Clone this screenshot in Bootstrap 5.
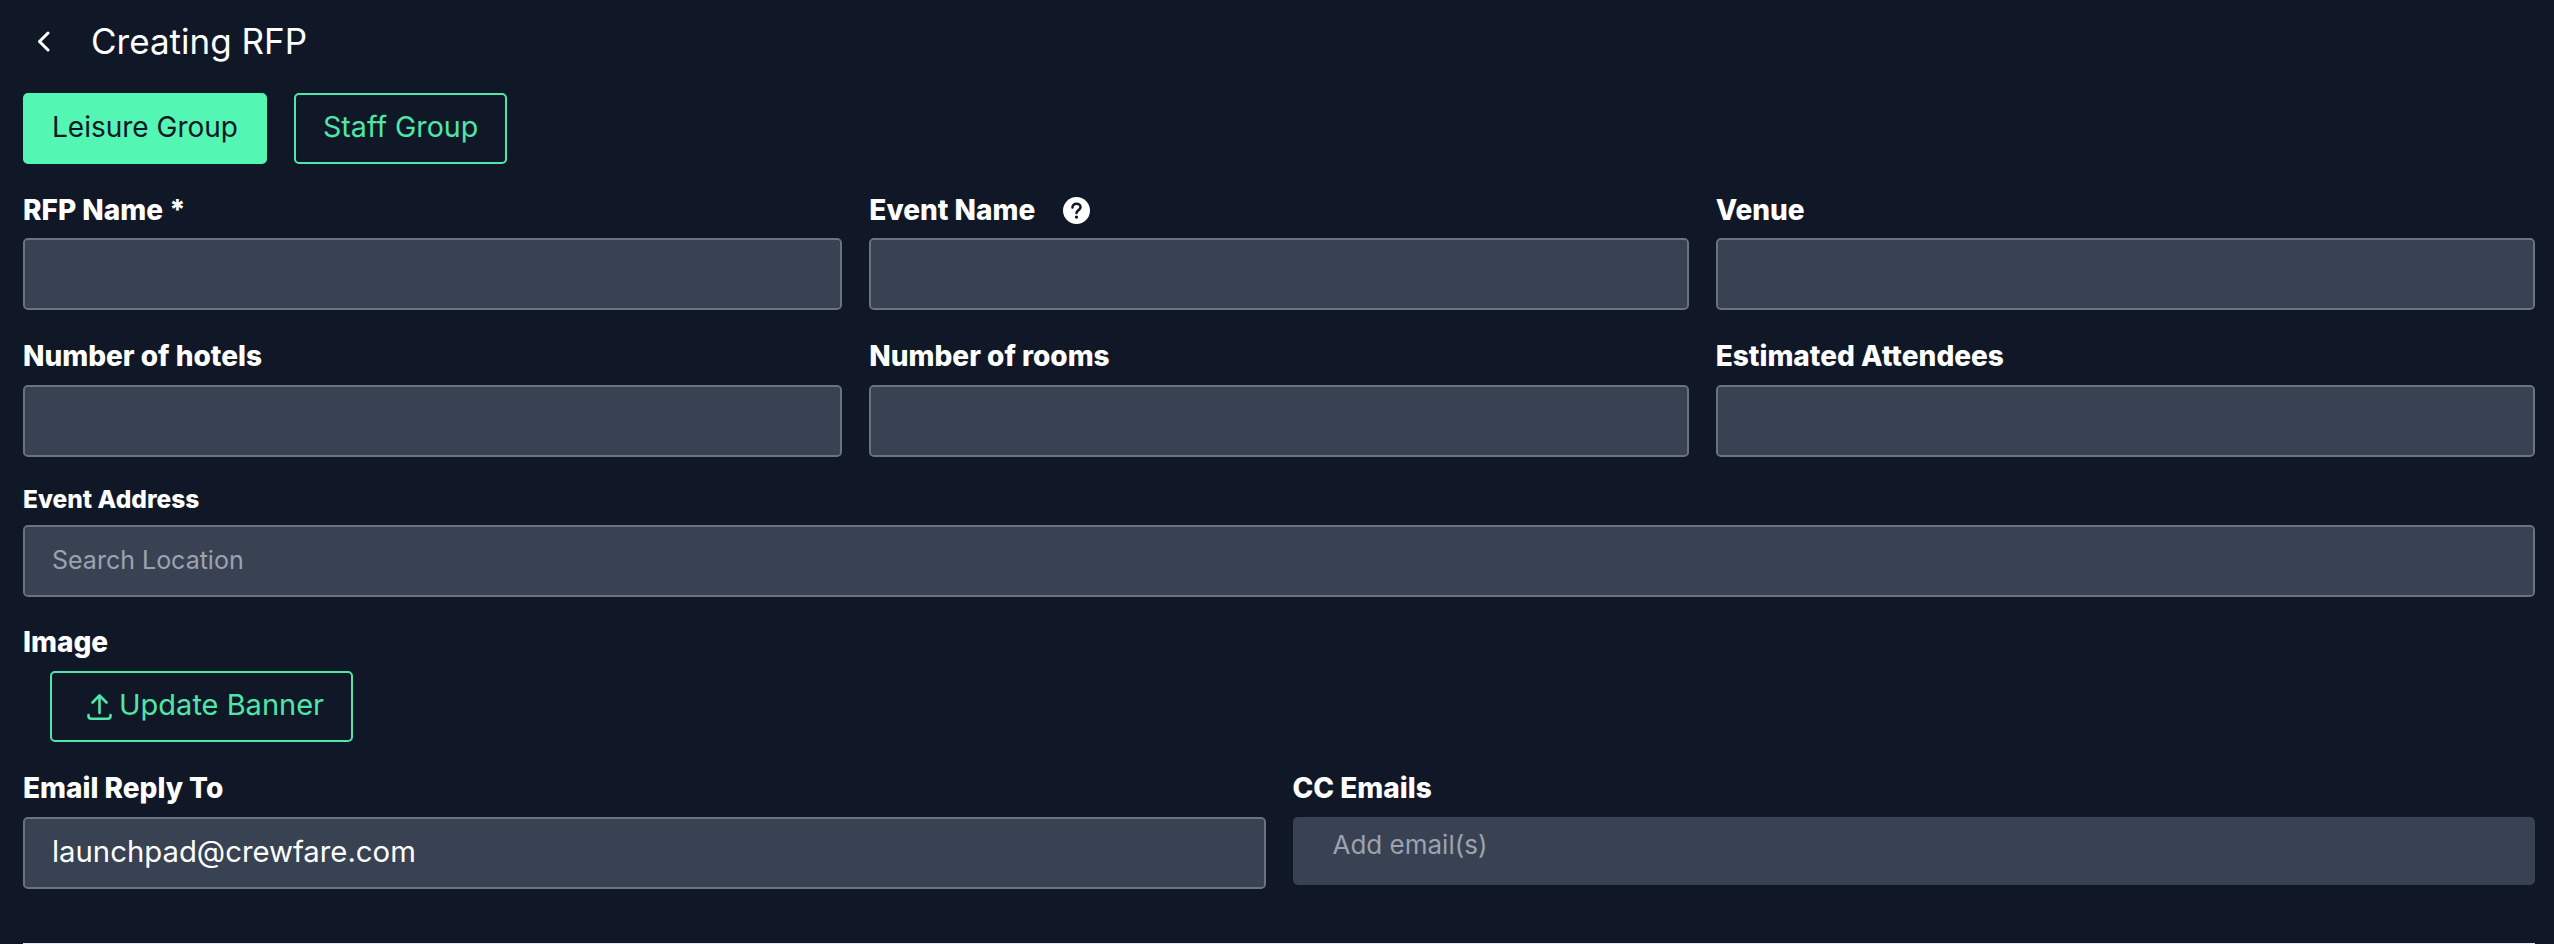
<!DOCTYPE html>
<html lang="en">

<head>
    <meta charset="UTF-8">
    <meta name="viewport" content="width=device-width, initial-scale=1.0">
    <link href="https://cdn.jsdelivr.net/npm/bootstrap@5.3.3/dist/css/bootstrap.min.css" rel="stylesheet">
    <script src="https://cdn.jsdelivr.net/npm/bootstrap@5.3.3/dist/js/bootstrap.bundle.min.js"></script>
    <title>Creating RFP</title>
    <style>
        body {
            background-color: #101827;
            color: #fff;
            font-family: "Inter", "Open Sans", sans-serif;
            height: 944px;
            overflow: hidden;
        }

        .rfp-page {
            padding: 0 19px 0 23px;
        }

        .rfp-head {
            height: 82px;
            margin-bottom: 11px;
            padding-left: 13px;
            gap: 40px;
        }

        .rfp-title {
            font-size: 35px;
            font-weight: 400;
            margin: 0;
        }

        .rfp-tabs {
            gap: 27px;
        }

        .rfp-btn {
            height: 71px;
            font-size: 28px;
            border-radius: 5px;
            border: 2px solid #50e6a9;
            padding: 0 27px 3px;
            color: #50e6a9;
            background: transparent;
        }

        .rfp-btn-on {
            background-color: #53f7b3;
            border-color: #53f7b3;
            color: #101827;
        }

        .rfp-btn-wide {
            font-size: 28.6px;
        }

        .rfp-btn-upload {
            margin-left: 27px;
            padding: 0 27px 0 35px;
            gap: 7px;
            font-size: 29px;
        }

        .rfp-btn-text {
            padding-bottom: 3px;
        }

        .rfp-row {
            --bs-gutter-x: 27px;
            --bs-gutter-y: 0;
        }

        .rfp-block {
            margin-top: 27px;
        }

        .rfp-block-low {
            margin-top: 28px;
        }

        .rfp-label {
            display: block;
            font-size: 28px;
            font-weight: 800;
            line-height: 34px;
            padding-top: 2px;
            margin: 0 0 12px;
        }

        .rfp-label-first {
            margin-bottom: 11px;
        }

        .rfp-label-sm {
            font-size: 24.5px;
            line-height: 30px;
            padding-top: 0;
            margin-bottom: 11px;
        }

        .rfp-label-tight {
            line-height: 36px;
            padding-top: 0;
            margin-bottom: 11px;
        }

        .rfp-help {
            margin-left: 28px;
        }

        .rfp-input.form-control {
            height: 72px;
            background-color: #384253;
            border: 2px solid #6b7280;
            border-radius: 5px;
            color: #fff;
            font-size: 29.3px;
            padding: 0 27px 3px;
        }

        .rfp-input.form-control::placeholder {
            color: #9ca3af;
            font-size: 25px;
        }

        .rfp-input-search.form-control {
            padding-bottom: 5px;
        }

        .rfp-cc {
            height: 68px;
            background-color: #384253;
            border-radius: 5px;
            color: #9ca3af;
            font-size: 26px;
            padding: 8px 40px;
        }

        .rfp-rule {
            margin: 54px 0 0;
            border: 0;
            border-top: 2px solid #e5e7eb;
            opacity: 1;
        }
    </style>
</head>

<body>
    <div class="rfp-page">
        <div class="rfp-head d-flex align-items-center">
            <svg width="15" height="21" viewBox="0 0 15 21" fill="none" stroke="#fff" stroke-width="3" stroke-linecap="round" stroke-linejoin="round">
                <path d="M12 2 L3.5 10.5 L12 19"></path>
            </svg>
            <h1 class="rfp-title">Creating RFP</h1>
        </div>

        <div class="d-flex rfp-tabs">
            <button type="button" class="btn rfp-btn rfp-btn-on">Leisure Group</button>
            <button type="button" class="btn rfp-btn rfp-btn-wide">Staff Group</button>
        </div>

        <div class="row rfp-row rfp-block">
            <div class="col-4">
                <label class="rfp-label rfp-label-first">RFP Name *</label>
                <input type="text" class="form-control rfp-input">
            </div>
            <div class="col-4">
                <label class="rfp-label rfp-label-first d-flex align-items-center">Event Name
                    <svg class="rfp-help" width="27" height="27" viewBox="0 0 28 28">
                        <circle cx="14" cy="14" r="14" fill="#fff"></circle>
                        <path d="M9.8 11 C9.8 8.4 11.8 7 14 7 C16.4 7 18.2 8.6 18.2 10.7 C18.2 13.6 14 13.6 14 16.6" fill="none" stroke="#101827" stroke-width="2.6" stroke-linecap="round"></path>
                        <circle cx="14" cy="20.8" r="1.7" fill="#101827"></circle>
                    </svg>
                </label>
                <input type="text" class="form-control rfp-input">
            </div>
            <div class="col-4">
                <label class="rfp-label rfp-label-first">Venue</label>
                <input type="text" class="form-control rfp-input">
            </div>
        </div>

        <div class="row rfp-row rfp-block">
            <div class="col-4">
                <label class="rfp-label">Number of hotels</label>
                <input type="text" class="form-control rfp-input">
            </div>
            <div class="col-4">
                <label class="rfp-label">Number of rooms</label>
                <input type="text" class="form-control rfp-input">
            </div>
            <div class="col-4">
                <label class="rfp-label">Estimated Attendees</label>
                <input type="text" class="form-control rfp-input">
            </div>
        </div>

        <div class="rfp-block">
            <label class="rfp-label rfp-label-sm">Event Address</label>
            <input type="text" class="form-control rfp-input rfp-input-search" placeholder="Search Location">
        </div>

        <div class="rfp-block">
            <label class="rfp-label rfp-label-tight">Image</label>
            <button type="button" class="btn rfp-btn rfp-btn-upload d-inline-flex align-items-center">
                <svg width="25" height="26" viewBox="0 0 25 26" fill="none" stroke="#50e6a9" stroke-width="2.6" stroke-linecap="round" stroke-linejoin="round">
                    <path d="M12.5 19 V2 M5.5 8.5 L12.5 1.5 L19.5 8.5 M1.5 21 V22 Q1.5 24.7 4.2 24.7 H20.8 Q23.5 24.7 23.5 22 V21"></path>
                </svg>
                <span class="rfp-btn-text">Update Banner</span>
            </button>
        </div>

        <div class="row rfp-row rfp-block-low">
            <div class="col-6">
                <label class="rfp-label rfp-label-tight">Email Reply To</label>
                <input type="text" class="form-control rfp-input" value="launchpad@crewfare.com">
            </div>
            <div class="col-6">
                <label class="rfp-label rfp-label-tight">CC Emails</label>
                <div class="rfp-cc">Add email(s)</div>
            </div>
        </div>

        <hr class="rfp-rule">
    </div>
</body>

</html>
